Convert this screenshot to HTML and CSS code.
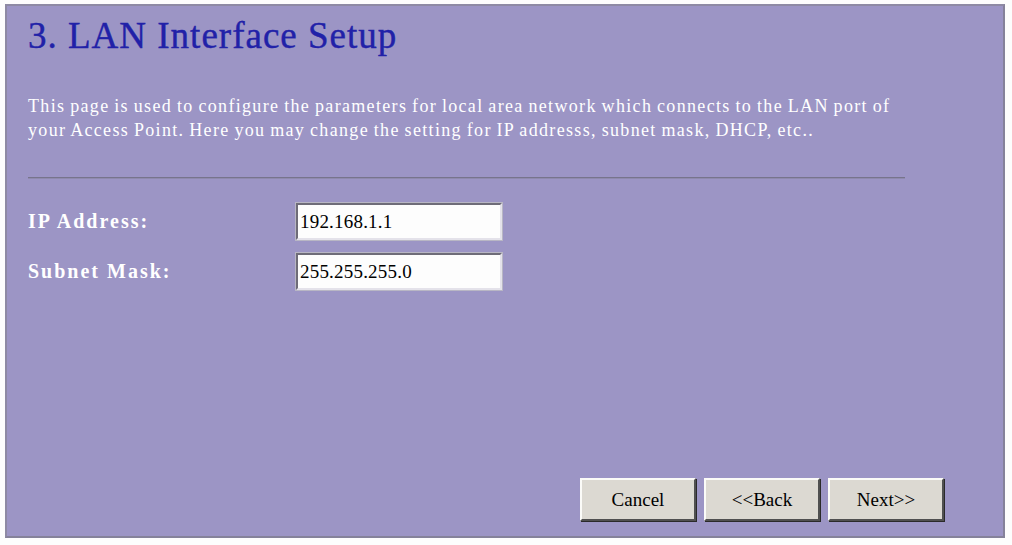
FILE: index.html
```html
<!DOCTYPE html>
<html lang="en">
<head>
    <meta charset="UTF-8">
    <title>LAN Interface Setup</title>
    <link rel="stylesheet" href="styles.css">
</head>
<body>
    <div class="wizard">
        <h1 class="wizard-title">3. LAN Interface Setup</h1>
        <p class="wizard-desc">This page is used to configure the parameters for local area network which connects to the LAN port of your Access Point. Here you may change the setting for IP addresss, subnet mask, DHCP, etc..</p>
        <hr class="divider">

        <div class="form-rows">
            <div class="form-row">
                <label class="form-label" for="ip">IP Address:</label>
                <input class="text-field" id="ip" type="text" value="192.168.1.1">
            </div>
            <div class="form-row">
                <label class="form-label" for="mask">Subnet Mask:</label>
                <input class="text-field" id="mask" type="text" value="255.255.255.0">
            </div>
        </div>

        <div class="button-bar">
            <button class="btn">Cancel</button>
            <button class="btn">&lt;&lt;Back</button>
            <button class="btn">Next&gt;&gt;</button>
        </div>
    </div>
</body>
</html>
```

FILE: styles.css
```css
* {
    box-sizing: border-box;
}

body {
    margin: 0;
    background: #fdfdfd;
    font-family: "Liberation Serif", "Times New Roman", serif;
    height: 545px;
    overflow: hidden;
}

.wizard {
    margin: 4px 7px 0 5px;
    height: 534px;
    background: #9c95c5;
    border: 2px solid #8a869c;
    border-color: #8e8aa4 #85829a #85829a #8e8aa4;
    padding: 0 23px 15px 21px;
    display: flex;
    flex-direction: column;
}

.wizard-title {
    margin: 10px 0 0 0;
    font-size: 37px;
    line-height: 40px;
    font-weight: normal;
    letter-spacing: 1px;
    color: #2121a8;
    -webkit-text-stroke: 0.4px #2121a8;
}

.wizard-desc {
    margin: 38px 0 0 0;
    font-size: 18px;
    line-height: 24px;
    letter-spacing: 1.33px;
    word-spacing: -1px;
    color: #ffffff;
    width: 875px;
}

.divider {
    margin: 35px 0 0 0;
    width: 877px;
    height: 2px;
    border: none;
    border-top: 1px solid #77748c;
    border-bottom: 1px solid #8f8aae;
}

.form-rows {
    margin-top: 24px;
    display: flex;
    flex-direction: column;
    gap: 13px;
}

.form-row {
    display: flex;
    align-items: center;
}

.form-label {
    width: 268px;
    font-size: 20px;
    font-weight: bold;
    letter-spacing: 2px;
    color: #ffffff;
}

.text-field {
    width: 206px;
    height: 37px;
    padding: 0 2px;
    font-family: "Liberation Serif", "Times New Roman", serif;
    font-size: 19px;
    letter-spacing: 0.2px;
    color: #000;
    background: #fdfdfd;
    border: 2px solid;
    border-color: #6e6c78 #e4e2ea #e4e2ea #6e6c78;
    outline: 1px solid #b8b6c4;
}

.button-bar {
    margin-top: auto;
    display: flex;
    justify-content: flex-end;
    gap: 8px;
    padding-right: 36px;
}

.btn {
    width: 116px;
    height: 43px;
    font-family: "Liberation Serif", "Times New Roman", serif;
    font-size: 19px;
    color: #000;
    background: #dcd9d2;
    border: 2px solid;
    border-color: #fbfbf8 #505050 #505050 #fbfbf8;
    box-shadow: 1px 1px 0 #2a2a2a;
    padding: 0;
}
```
